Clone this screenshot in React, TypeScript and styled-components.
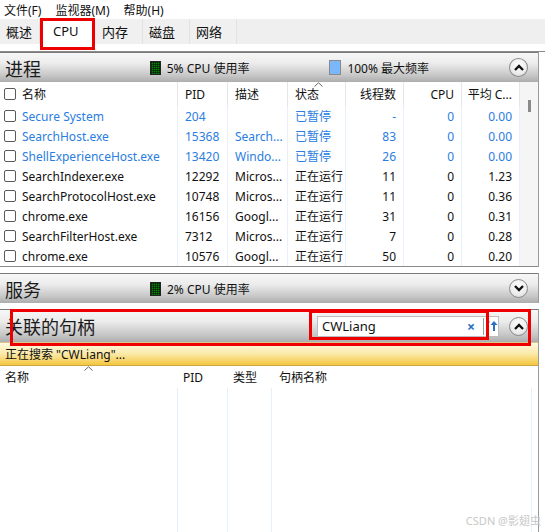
import styled, { createGlobalStyle } from "styled-components";

const GlobalStyle = createGlobalStyle`
  html, body {
    margin: 0;
    padding: 0;
    background: #ffffff;
  }
  body {
    font-family: "Noto Sans", "Noto Sans CJK SC", sans-serif;
    font-size: 12px;
    color: #111;
  }
  * {
    box-sizing: border-box;
  }
`;

const Page = styled.div`
  position: relative;
  width: 545px;
  height: 532px;
  overflow: hidden;
  background: #fff;
`;

const MenuBar = styled.div`
  height: 19px;
  display: flex;
  align-items: center;
  gap: 14px;
  padding-left: 4px;
  font-size: 12px;
`;

const TabStrip = styled.div`
  height: 33px;
  display: flex;
  align-items: flex-start;
  background: linear-gradient(#efefef 0, #efefef 25px, #fff 25px);
  border-bottom: 1px solid #8a8a8a;
`;

const Tab = styled.div<{ $active?: boolean; $w: number }>`
  width: ${(p) => p.$w}px;
  height: ${(p) => (p.$active ? 30 : 25)}px;
  display: flex;
  align-items: center;
  padding-left: 6px;
  font-size: 13px;
  background: ${(p) => (p.$active ? "#fff" : "#f0f0f0")};
  border-right: 1px solid #e2e2e2;
  ${(p) =>
    p.$active &&
    `
    padding-left: 12px;
    padding-bottom: 6px;
    outline: 3px solid #ee0000;
    outline-offset: -2px;
    margin: 0 2px 0 1px;
  `}
`;

const Pane = styled.div`
  width: 539px;
  border-right: 1px solid #9a9a9a;
`;

const SectionHeader = styled.div<{ $h: number }>`
  position: relative;
  height: ${(p) => p.$h}px;
  display: flex;
  align-items: center;
  padding: 0 10px 0 5px;
  border-top: 1px solid #7a7a7a;
  background: linear-gradient(#f7f7f7 0%, #ececec 35%, #c9c9c9 75%, #adadad 100%);
`;

const SectionTitle = styled.div`
  font-size: 18px;
  width: 145px;
  color: #1b1b1b;
`;

const Meter = styled.div<{ $w?: number }>`
  display: flex;
  align-items: center;
  gap: 6px;
  width: ${(p) => p.$w ?? 180}px;
  font-size: 12px;
`;

const GreenBox = styled.span`
  width: 11px;
  height: 14px;
  border: 1px solid #222;
  background-color: #0a7d0a;
  background-image: linear-gradient(90deg, rgba(0, 0, 0, 0.45) 1px, transparent 1px),
    linear-gradient(rgba(0, 0, 0, 0.45) 1px, transparent 1px);
  background-size: 2px 2px;
`;

const BlueBox = styled.span`
  width: 12px;
  height: 15px;
  border: 1px solid #8a8a8a;
  background: #7bb8fb;
`;

const Spacer = styled.div`
  flex: 1;
`;

const RoundBtn = styled.div`
  width: 19px;
  height: 19px;
  border-radius: 50%;
  border: 1px solid #8c8c8c;
  background: radial-gradient(circle at 50% 35%, #ffffff 0%, #ececec 60%, #cfcfcf 100%);
  display: flex;
  align-items: center;
  justify-content: center;
`;

const Grid = styled.div<{ $cols: string }>`
  display: grid;
  grid-template-columns: ${(p) => p.$cols};
`;

const HeadCell = styled.div<{ $right?: boolean }>`
  position: relative;
  height: 24px;
  display: flex;
  align-items: center;
  justify-content: ${(p) => (p.$right ? "flex-end" : "flex-start")};
  padding: 0 7px;
  border-right: 1px solid #e6e6e6;
  white-space: nowrap;
`;

const Cell = styled.div<{ $right?: boolean; $blue?: boolean }>`
  height: 20px;
  display: flex;
  align-items: center;
  justify-content: ${(p) => (p.$right ? "flex-end" : "flex-start")};
  gap: 6px;
  padding: 0 7px;
  border-right: 1px solid #e8f0fb;
  color: ${(p) => (p.$blue ? "#2a7de1" : "#111")};
  white-space: nowrap;
  overflow: hidden;
`;

const NameCell = styled(Cell)`
  padding-left: 4px;
`;

const Check = styled.span`
  flex: none;
  width: 12px;
  height: 12px;
  border: 1px solid #5a5a5a;
  border-radius: 2px;
  background: #fff;
`;

const SortCaret = styled.svg<{ $left: number }>`
  position: absolute;
  top: 0;
  left: ${(p) => p.$left}px;
`;

const ScrollTrack = styled.div`
  grid-row: span 9;
  background: #f5f5f5;
  display: flex;
  justify-content: center;
  padding-top: 18px;
`;

const Thumb = styled.div`
  width: 3px;
  height: 12px;
  background: #8a8a8a;
`;

const ProcList = styled.div`
  border-bottom: 1px solid #8a8a8a;
`;

const Gap = styled.div<{ $h: number }>`
  height: ${(p) => p.$h}px;
`;

const SearchBox = styled.div`
  width: 182px;
  height: 21px;
  background: #fff;
  border: 1px solid #bdbdbd;
  display: flex;
  align-items: center;
  padding-left: 4px;
  margin-right: 10px;
  font-size: 13px;
  color: #111;
`;

const SearchText = styled.span`
  flex: 1;
`;

const ClearX = styled.span`
  color: #2a6fc0;
  font-size: 14px;
  font-weight: bold;
  width: 14px;
  text-align: center;
`;

const SearchSep = styled.span`
  width: 1px;
  height: 17px;
  background: #9b9b9b;
  margin: 0 2px 0 5px;
`;

const YellowBar = styled.div`
  height: 24px;
  display: flex;
  align-items: center;
  padding-left: 5px;
  border-top: 1px solid #d7c78a;
  border-bottom: 1px solid #c8a640;
  background: linear-gradient(#fef9e2 0%, #fbe9a6 50%, #f5c63e 100%);
`;

const HandleHead = styled.div`
  position: relative;
  height: 22px;
  display: flex;
  align-items: center;
  padding: 0 5px;
`;

const HandleCol = styled.div`
  height: 164px;
  border-right: 1px solid #e6effc;
`;

const RedFrame = styled.div<{ $x: number; $y: number; $w: number; $h: number }>`
  position: absolute;
  left: ${(p) => p.$x}px;
  top: ${(p) => p.$y}px;
  width: ${(p) => p.$w}px;
  height: ${(p) => p.$h}px;
  border: 3px solid #ee0000;
  pointer-events: none;
`;

const Watermark = styled.div`
  position: absolute;
  right: 4px;
  bottom: 4px;
  font-size: 11px;
  color: #c8c8c8;
`;

const ChevronUp = () => (
  <svg width="10" height="7" viewBox="0 0 10 7">
    <path d="M1 6 L5 2 L9 6" stroke="#111" strokeWidth="2.4" fill="none" />
  </svg>
);

const ChevronDown = () => (
  <svg width="10" height="7" viewBox="0 0 10 7">
    <path d="M1 1 L5 5 L9 1" stroke="#111" strokeWidth="2.4" fill="none" />
  </svg>
);

const Caret = ({ left }: { left: number }) => (
  <SortCaret $left={left} width="9" height="5" viewBox="0 0 9 5">
    <path d="M0.5 4.5 L4.5 0.8 L8.5 4.5" stroke="#666" strokeWidth="1" fill="none" />
  </SortCaret>
);

const UpArrowIcon = () => (
  <svg width="12" height="14" viewBox="0 0 12 14">
    <path d="M1 3 L4 3" stroke="#5a8fd0" strokeWidth="1" strokeDasharray="1 1" />
    <path d="M8 2 L4.5 6 L7 6 L7 12 L9 12 L9 6 L11.5 6 Z" fill="#2a6fc0" />
  </svg>
);

interface IProc {
  name: string;
  pid: string;
  desc: string;
  state: string;
  threads: string;
  cpu: string;
  avg: string;
  blue?: boolean;
}

const procs: IProc[] = [
  { name: "Secure System", pid: "204", desc: "", state: "已暂停", threads: "-", cpu: "0", avg: "0.00", blue: true },
  { name: "SearchHost.exe", pid: "15368", desc: "Search...", state: "已暂停", threads: "83", cpu: "0", avg: "0.00", blue: true },
  { name: "ShellExperienceHost.exe", pid: "13420", desc: "Windo...", state: "已暂停", threads: "26", cpu: "0", avg: "0.00", blue: true },
  { name: "SearchIndexer.exe", pid: "12292", desc: "Micros...", state: "正在运行", threads: "11", cpu: "0", avg: "1.23" },
  { name: "SearchProtocolHost.exe", pid: "10748", desc: "Micros...", state: "正在运行", threads: "11", cpu: "0", avg: "0.36" },
  { name: "chrome.exe", pid: "16156", desc: "Googl...", state: "正在运行", threads: "31", cpu: "0", avg: "0.31" },
  { name: "SearchFilterHost.exe", pid: "7312", desc: "Micros...", state: "正在运行", threads: "7", cpu: "0", avg: "0.28" },
  { name: "chrome.exe", pid: "10576", desc: "Googl...", state: "正在运行", threads: "50", cpu: "0", avg: "0.20" },
];

const tabs = [
  { label: "概述", w: 40 },
  { label: "CPU", w: 53, active: true },
  { label: "内存", w: 47 },
  { label: "磁盘", w: 47 },
  { label: "网络", w: 47 },
];

function App() {
  return (
    <Page>
      <GlobalStyle />
      <MenuBar>
        <span>文件(F)</span>
        <span>监视器(M)</span>
        <span>帮助(H)</span>
      </MenuBar>
      <TabStrip>
        {tabs.map((t) => (
          <Tab key={t.label} $w={t.w} $active={t.active}>
            {t.label}
          </Tab>
        ))}
      </TabStrip>

      <Pane>
        <SectionHeader $h={30}>
          <SectionTitle>进程</SectionTitle>
          <Meter>
            <GreenBox />
            5% CPU 使用率
          </Meter>
          <Meter>
            <BlueBox />
            100% 最大频率
          </Meter>
          <Spacer />
          <RoundBtn>
            <ChevronUp />
          </RoundBtn>
        </SectionHeader>

        <ProcList>
          <Grid $cols="178px 50px 60px 58px 58px 58px 58px 18px">
            <HeadCell style={{ paddingLeft: 4 }}>
              <Check />
              <span style={{ marginLeft: 6 }}>名称</span>
            </HeadCell>
            <HeadCell>PID</HeadCell>
            <HeadCell>描述</HeadCell>
            <HeadCell>
              <Caret left={26} />
              状态
            </HeadCell>
            <HeadCell $right>线程数</HeadCell>
            <HeadCell $right>CPU</HeadCell>
            <HeadCell $right>平均 C...</HeadCell>
            <ScrollTrack>
              <Thumb />
            </ScrollTrack>
            {procs.map((p, i) => [
              <NameCell key={`n${i}`} $blue={p.blue}>
                <Check />
                {p.name}
              </NameCell>,
              <Cell key={`p${i}`} $blue={p.blue}>{p.pid}</Cell>,
              <Cell key={`d${i}`} $blue={p.blue}>{p.desc}</Cell>,
              <Cell key={`s${i}`} $blue={p.blue}>{p.state}</Cell>,
              <Cell key={`t${i}`} $right $blue={p.blue}>{p.threads}</Cell>,
              <Cell key={`c${i}`} $right $blue={p.blue}>{p.cpu}</Cell>,
              <Cell key={`a${i}`} $right $blue={p.blue}>{p.avg}</Cell>,
            ])}
          </Grid>
        </ProcList>
      </Pane>

      <Gap $h={6} />

      <Pane>
        <SectionHeader $h={30}>
          <SectionTitle>服务</SectionTitle>
          <Meter>
            <GreenBox />
            2% CPU 使用率
          </Meter>
          <Spacer />
          <RoundBtn>
            <ChevronDown />
          </RoundBtn>
        </SectionHeader>
      </Pane>

      <Gap $h={6} />

      <Pane>
        <SectionHeader $h={33}>
          <SectionTitle>关联的句柄</SectionTitle>
          <Spacer />
          <SearchBox>
            <SearchText>CWLiang</SearchText>
            <ClearX>×</ClearX>
            <SearchSep />
            <UpArrowIcon />
          </SearchBox>
          <RoundBtn>
            <ChevronUp />
          </RoundBtn>
        </SectionHeader>
        <YellowBar>正在搜索 "CWLiang"...</YellowBar>
        <Grid $cols="178px 50px 44px 260px 1fr">
          <HandleHead>
            <Caret left={84} />
            名称
          </HandleHead>
          <HandleHead>PID</HandleHead>
          <HandleHead>类型</HandleHead>
          <HandleHead style={{ paddingLeft: 7 }}>句柄名称</HandleHead>
          <HandleHead />
          <HandleCol />
          <HandleCol />
          <HandleCol />
          <HandleCol />
          <div />
        </Grid>
      </Pane>

      <RedFrame $x={10} $y={309} $w={521} $h={37} />
      <RedFrame $x={309} $y={310} $w={180} $h={30} />
      <Watermark>CSDN @影翅虫</Watermark>
    </Page>
  );
}

export default App;
